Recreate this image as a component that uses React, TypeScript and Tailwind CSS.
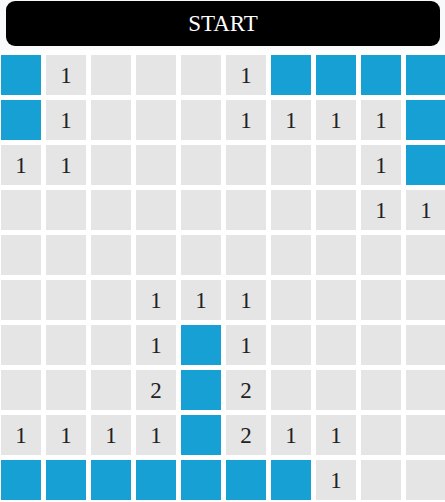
import React from "react";

const B = "B";
const grid: string[][] = [
  [B, "1", "", "", "", "1", B, B, B, B],
  [B, "1", "", "", "", "1", "1", "1", "1", B],
  ["1", "1", "", "", "", "", "", "", "1", B],
  ["", "", "", "", "", "", "", "", "1", "1"],
  ["", "", "", "", "", "", "", "", "", ""],
  ["", "", "", "1", "1", "1", "", "", "", ""],
  ["", "", "", "1", B, "1", "", "", "", ""],
  ["", "", "", "2", B, "2", "", "", "", ""],
  ["1", "1", "1", "1", B, "2", "1", "1", "", ""],
  [B, B, B, B, B, B, B, "1", "", ""],
];

export default function App() {
  return (
    <div
      className="w-[445px] h-[502px] overflow-hidden bg-white"
      style={{ fontFamily: '"Liberation Serif", "Times New Roman", serif' }}
    >
      <div className="h-[50px] bg-[#f8f9fa] pt-[1px] px-[6px] pr-[5px]">
        <button className="w-full h-[45px] rounded-[9px] bg-black text-white text-[23px] leading-none flex items-center justify-center">
          START
        </button>
      </div>
      <div className="pt-[5px] pl-[1px] grid grid-cols-[repeat(10,40px)] auto-rows-[40px] gap-[5px] w-[446px]">
        {grid.flatMap((row, r) =>
          row.map((c, i) =>
            c === B ? (
              <div key={`${r}-${i}`} className="bg-[#16a0d4]" />
            ) : (
              <div
                key={`${r}-${i}`}
                className="bg-[#e5e5e5] flex items-center justify-center text-[23px] text-[#222] leading-none"
              >
                {c}
              </div>
            )
          )
        )}
      </div>
    </div>
  );
}
